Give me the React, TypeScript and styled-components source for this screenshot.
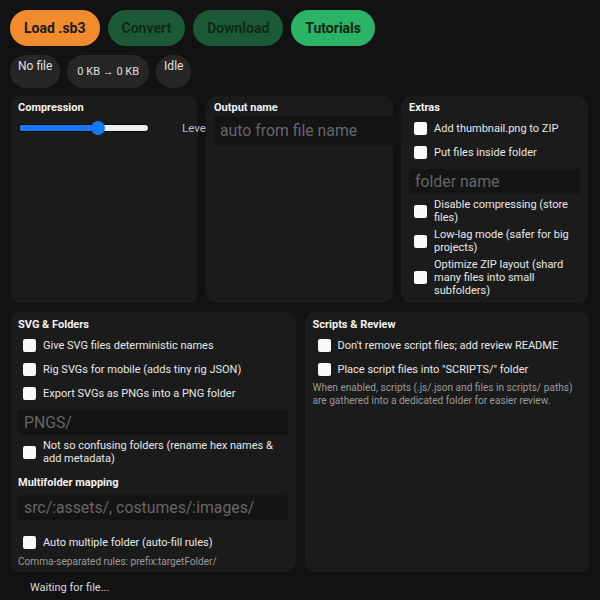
import styled, { createGlobalStyle } from "styled-components";

const GlobalStyle = createGlobalStyle`
  html, body {
    margin: 0;
    background: #121212;
    color: #e6e6e6;
    font-family: Roboto, "Noto Sans", sans-serif;
  }
`;

const Page = styled.div`
  width: 600px;
  height: 600px;
  box-sizing: border-box;
  padding: 10px;
  overflow: hidden;
`;

const Toolbar = styled.div`
  display: flex;
  gap: 8px;
`;

const Button = styled.button<{ $bg: string; $fg: string }>`
  height: 36px;
  padding: 0 14px;
  border: none;
  border-radius: 18px;
  background: ${({ $bg }) => $bg};
  color: ${({ $fg }) => $fg};
  font-family: inherit;
  font-size: 14px;
  font-weight: 700;
`;

const Pills = styled.div`
  display: flex;
  gap: 7px;
  margin-top: 9px;
`;

const Pill = styled.div<{ $center?: boolean }>`
  display: flex;
  align-items: ${({ $center }) => ($center ? "center" : "flex-start")};
  height: 33px;
  box-sizing: border-box;
  padding: ${({ $center }) => ($center ? "0 10px" : "4px 8px")};
  border-radius: 16px;
  background: #262626;
  font-size: ${({ $center }) => ($center ? 11 : 12)}px;
  color: #e0e0e0;
`;

const TopGrid = styled.div`
  display: grid;
  grid-template-columns: 188px 187px 187px;
  grid-template-rows: 207px;
  gap: 8px;
  margin-top: 8px;
`;

const BottomGrid = styled.div`
  display: grid;
  grid-template-columns: 1fr 1fr;
  grid-template-rows: 260px;
  gap: 9px;
  margin-top: 9px;
`;

const Panel = styled.section<{ $top?: number }>`
  position: relative;
  background: #1b1b1b;
  border-radius: 10px;
  padding: ${({ $top }) => $top ?? 5}px 8px 3px;
  box-sizing: border-box;
  min-width: 0;
`;

const Title = styled.div<{ $gap?: number }>`
  font-size: 11px;
  font-weight: 700;
  line-height: 14px;
  color: #f2f2f2;
  margin-top: ${({ $gap }) => $gap ?? 0}px;
  margin-bottom: 1px;
`;

const SliderRow = styled.div`
  display: flex;
  align-items: center;
  height: 24px;
  white-space: nowrap;
`;

const Track = styled.div`
  position: relative;
  flex: none;
  width: 128px;
  height: 6px;
  margin-left: 2px;
  border-radius: 4px;
  background: #eeeeee;
  box-shadow: 0 0 0 1px #0a0a0a;
`;

const Fill = styled.div`
  height: 100%;
  border-radius: 4px;
  background: #1877f2;
`;

const Thumb = styled.div`
  position: absolute;
  top: -4px;
  width: 14px;
  height: 14px;
  margin-left: -7px;
  border-radius: 50%;
  background: #1877f2;
`;

const SliderLabel = styled.span`
  flex: none;
  margin-left: 34px;
  font-size: 11.6px;
  color: #bdbdbd;
`;

const TextInput = styled.input<{ $big?: boolean; $after?: number }>`
  display: block;
  width: ${({ $big }) => ($big ? "200px" : "100%")};
  height: ${({ $big }) => ($big ? 29 : 25)}px;
  box-sizing: border-box;
  margin: ${({ $big, $after }) => ($big ? "1px 0 0" : `5px 0 ${$after ?? 2}px`)};
  padding: 0 6px;
  border: none;
  border-radius: 3px;
  background: #141414;
  color: #ddd;
  font-family: inherit;
  font-size: 15.8px;
  outline: none;
  &::placeholder {
    color: #666;
  }
`;

const Row = styled.label`
  display: flex;
  align-items: center;
  min-height: 24px;
  padding: 2px 0;
  box-sizing: border-box;
  font-size: 11px;
  line-height: 13px;
  color: #e8e8e8;
`;

const Box = styled.span`
  flex: none;
  width: 13px;
  height: 13px;
  margin: 0 7px 0 5px;
  border-radius: 2px;
  background: #fafafa;
`;

const Help = styled.div<{ $gap?: number }>`
  font-size: 10.1px;
  line-height: 13px;
  color: #9a9a9a;
  margin-top: ${({ $gap }) => $gap ?? 0}px;
`;

const Status = styled.div`
  margin: 9px 0 0 20px;
  font-size: 11px;
  line-height: 14px;
  color: #dcdcdc;
`;

const Check = ({ children }: { children: React.ReactNode }) => (
  <Row>
    <Box />
    <span>{children}</span>
  </Row>
);

export default function App() {
  const level = 61;
  return (
    <Page>
      <GlobalStyle />
      <Toolbar>
        <Button $bg="#f08c2b" $fg="#1e1a16">Load .sb3</Button>
        <Button $bg="#1b5a35" $fg="#0f2a1a">Convert</Button>
        <Button $bg="#1b5a35" $fg="#0f2a1a">Download</Button>
        <Button $bg="#2bb466" $fg="#0c2516">Tutorials</Button>
      </Toolbar>
      <Pills>
        <Pill>No file</Pill>
        <Pill $center>0 KB → 0 KB</Pill>
        <Pill>Idle</Pill>
      </Pills>

      <TopGrid>
        <Panel>
          <Title>Compression</Title>
          <SliderRow>
            <Track>
              <Fill style={{ width: `${level}%` }} />
              <Thumb style={{ left: `${level}%` }} />
            </Track>
            <SliderLabel>Level</SliderLabel>
          </SliderRow>
        </Panel>
        <Panel>
          <Title>Output name</Title>
          <TextInput $big placeholder="auto from file name" />
        </Panel>
        <Panel>
          <Title>Extras</Title>
          <Check>Add thumbnail.png to ZIP</Check>
          <Check>Put files inside folder</Check>
          <TextInput placeholder="folder name" />
          <Check>Disable compressing (store files)</Check>
          <Check>Low-lag mode (safer for big projects)</Check>
          <Check>Optimize ZIP layout (shard many files into small subfolders)</Check>
        </Panel>
      </TopGrid>

      <BottomGrid>
        <Panel $top={6}>
          <Title>SVG &amp; Folders</Title>
          <Check>Give SVG files deterministic names</Check>
          <Check>Rig SVGs for mobile (adds tiny rig JSON)</Check>
          <Check>Export SVGs as PNGs into a PNG folder</Check>
          <TextInput placeholder="PNGS/" />
          <Check>Not so confusing folders (rename hex names &amp; add metadata)</Check>
          <Title $gap={9}>Multifolder mapping</Title>
          <TextInput $after={10} placeholder="src/:assets/, costumes/:images/" />
          <Check>Auto multiple folder (auto-fill rules)</Check>
          <Help $gap={1}>Comma-separated rules: prefix:targetFolder/</Help>
        </Panel>
        <Panel $top={6}>
          <Title>Scripts &amp; Review</Title>
          <Check>Don't remove script files; add review README</Check>
          <Check>Place script files into "SCRIPTS/" folder</Check>
          <Help>
            When enabled, scripts (.js/.json and files in scripts/ paths) are
            gathered into a dedicated folder for easier review.
          </Help>
        </Panel>
      </BottomGrid>
      <Status>Waiting for file...</Status>
    </Page>
  );
}
